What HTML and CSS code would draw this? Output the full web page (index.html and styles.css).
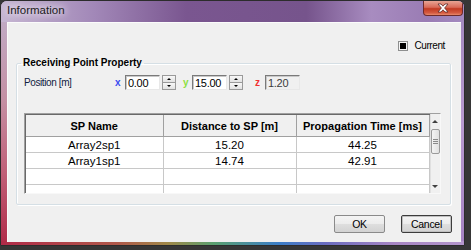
FILE: index.html
```html
<!DOCTYPE html>
<html lang="en">
<head>
  <meta charset="UTF-8">
  <title>Information</title>
  <link rel="stylesheet" href="styles.css">
</head>
<body>

<div class="window">
  <div class="titlebar">
    <span class="title">Information</span>
    <div class="close">
      <svg width="14" height="10" viewBox="0 0 14 10">
        <path d="M2 1 L5 1 L7 3.2 L9 1 L12 1 L8.6 5 L12 9 L9 9 L7 6.8 L5 9 L2 9 L5.4 5 Z" fill="#fff" stroke="#5a2a2a" stroke-width="0.8"/>
      </svg>
    </div>
  </div>

  <div class="client">
    <div class="top-row">
      <label class="check"><span class="box"><span class="mark"></span></span>Current</label>
    </div>

    <fieldset class="group">
      <legend>Receiving Point Property</legend>

      <div class="pos-row">
        <span class="pos-label">Position [m]</span>
        <span class="axis ax-x">x</span>
        <span class="field">0.00</span>
        <span class="spin"><span class="up"></span><span class="down"></span></span>
        <span class="axis ax-y">y</span>
        <span class="field">15.00</span>
        <span class="spin"><span class="up"></span><span class="down"></span></span>
        <span class="axis ax-z">z</span>
        <span class="field disabled">1.20</span>
      </div>

      <div class="list">
        <table class="grid">
          <colgroup>
            <col class="c1"><col class="c2"><col class="c3">
          </colgroup>
          <thead>
            <tr><th>SP Name</th><th>Distance to SP [m]</th><th>Propagation Time [ms]</th></tr>
          </thead>
          <tbody>
            <tr><td>Array2sp1</td><td>15.20</td><td>44.25</td></tr>
            <tr><td>Array1sp1</td><td>14.74</td><td>42.91</td></tr>
            <tr><td></td><td></td><td></td></tr>
            <tr><td></td><td></td><td></td></tr>
          </tbody>
        </table>
        <div class="vscroll">
          <div class="arrow arrow-up"></div>
          <div class="track"><div class="thumb"><span></span><span></span><span></span></div></div>
          <div class="arrow arrow-down"></div>
        </div>
      </div>
    </fieldset>

    <div class="buttons">
      <button type="button" class="btn">OK</button>
      <button type="button" class="btn default">Cancel</button>
    </div>
  </div>
</div>

</body>
</html>
```

FILE: styles.css
```css
body {
  margin: 0;
  background: #363636;
  font-family: 'Liberation Sans', Arial, sans-serif;
  color: #000;
}

.window {
  width: 465px;
  height: 246px;
  box-sizing: border-box;
  border: 1px solid #2c2c2c;
  border-radius: 7px 7px 0 0;
  overflow: hidden;
  background:
    linear-gradient(to right, #b02a48 0%, #b0584a 25%, #a08848 36%, #5aa070 46%, #3c7ec8 60%, #6a6cc0 70%, #a886c4 85%, #b496cc 100%) left bottom / 100% 4px no-repeat,
    linear-gradient(to bottom, #c0b0cc 0%, #c490a4 40%, #c06078 70%, #b02a48 100%) left top / 6px 100% no-repeat,
    linear-gradient(to bottom, #a086bc 0%, #b89ad0 50%, #a582c2 100%) right top / 3px 100% no-repeat,
    #a48ac0;
}

.titlebar {
  height: 21px;
  display: flex;
  justify-content: space-between;
  align-items: flex-start;
  background: linear-gradient(to right, #c6b6d2 0%, #a288b8 20%, #7a5690 40%, #76548c 66%, #a88cc0 80%, #9a7cb4 92%, #a48ac0 100%);
}

.title {
  margin: 3px 0 0 6px;
  font-size: 11.5px;
  color: #202020;
  text-shadow: 0 0 6px #f2ecf6, 0 0 10px #f2ecf6;
}

.close {
  width: 40px;
  height: 15px;
  margin-right: 1px;
  box-sizing: border-box;
  border: 1px solid #6e2a2a;
  border-top: none;
  border-radius: 0 0 4px 4px;
  background: linear-gradient(to bottom, #e8a494 0%, #d86a58 45%, #c23a22 55%, #d45a40 85%, #e88a6c 100%);
  display: flex;
  justify-content: center;
  align-items: center;
}

.client {
  width: 454px;
  height: 220px;
  margin-left: 6px;
  box-sizing: border-box;
  background: #f0f0f0;
  border-top: 1px solid #fbfbfb;
  border-left: 1px solid #fbfbfb;
}

.top-row {
  display: flex;
  justify-content: flex-end;
  padding: 17px 16px 0 0;
  height: 11px;
}

.check {
  display: flex;
  align-items: center;
  gap: 6px;
  font-size: 10px;
  letter-spacing: -0.4px;
  line-height: 11px;
}

.box {
  width: 10px;
  height: 10px;
  box-sizing: border-box;
  border: 1px solid #8e8f8f;
  background: #f4f4f4;
  display: flex;
  justify-content: center;
  align-items: center;
}

.mark {
  width: 6px;
  height: 6px;
  background: #000;
}

.group {
  margin: 6px 0 0 8px;
  width: 435px;
  box-sizing: border-box;
  padding: 0 0 10px 0;
  border: 1px solid #d5dfe5;
  box-shadow: inset 1px 1px 0 #fff, 1px 1px 0 #fff;
  border-radius: 2px;
}

.group legend {
  margin-left: 4px;
  padding: 0 2px;
  font-size: 10px;
  font-weight: bold;
  line-height: 12px;
}

.pos-row {
  display: flex;
  align-items: center;
  height: 15px;
  margin-top: 6px;
  padding-left: 7px;
  font-size: 10px;
  letter-spacing: -0.4px;
}

.pos-label {
  width: 91px;
  color: #102040;
}

.axis {
  font-weight: bold;
  font-size: 10px;
  letter-spacing: 0;
}
.ax-x { width: 10px; color: #3a4cf0; }
.ax-y { width: 9px; color: #8ce040; }
.ax-z { width: 10px; color: #f03030; margin-left: 5px; }

.field {
  width: 35px;
  height: 15px;
  box-sizing: border-box;
  padding: 1px 0 0 2px;
  border: 1px solid;
  border-color: #7a7a7a #e8e8e8 #e8e8e8 #7a7a7a;
  box-shadow: inset 1px 1px 0 #c8c8c8;
  background: #fff;
  font-size: 11px;
  letter-spacing: -0.3px;
  line-height: 12px;
}
.field.disabled {
  background: #f0f0f0;
  color: #3a3a3a;
}

.spin {
  width: 14px;
  height: 15px;
  margin: 0 7px 0 2px;
  display: flex;
  flex-direction: column;
}
.spin span {
  flex: 1;
  border: 1px solid #9a9a9a;
  background: linear-gradient(#f8f8f8, #e2e2e2);
  display: flex;
  justify-content: center;
  align-items: center;
}
.spin span + span { border-top: none; }
.spin .up::after {
  content: "";
  border: 2px solid transparent;
  border-bottom: 2px solid #000;
  border-top: none;
}
.spin .down::after {
  content: "";
  border: 2px solid transparent;
  border-top: 2px solid #000;
  border-bottom: none;
}

.list {
  display: flex;
  width: 417px;
  height: 81px;
  margin: 23px 0 0 7px;
  box-sizing: border-box;
  border: 1px solid;
  border-color: #a0a0a0 #f8f8f8 #f8f8f8 #a0a0a0;
  box-shadow: inset 1px 1px 0 #696969;
  background: #fff;
  overflow: hidden;
}

.grid {
  border-collapse: collapse;
  table-layout: fixed;
  width: 403px;
  margin: 1px 0 0 1px;
  font-size: 11.5px;
}
.grid .c1 { width: 137px; }
.grid .c2 { width: 133px; }
.grid .c3 { width: 133px; }

.grid th {
  height: 21px;
  padding: 0;
  background: #f0f0f0;
  border-right: 1px solid #a0a0a0;
  border-bottom: 1px solid #a0a0a0;
  font-size: 11px;
  font-weight: bold;
  text-align: center;
}

.grid td {
  height: 15px;
  padding: 0;
  border-right: 1px solid #c8c8c8;
  border-bottom: 1px solid #c8c8c8;
  text-align: center;
  line-height: 14px;
}

.vscroll {
  width: 12px;
  display: flex;
  flex-direction: column;
  background: #f0f0f0;
  border-left: 1px solid #e0e0e0;
}

.arrow {
  height: 14px;
  display: flex;
  justify-content: center;
  align-items: center;
}
.arrow-up::after {
  content: "";
  border: 3px solid transparent;
  border-bottom: 3px solid #404040;
  border-top: none;
}
.arrow-down::after {
  content: "";
  border: 3px solid transparent;
  border-top: 3px solid #404040;
  border-bottom: none;
}

.track {
  flex: 1;
  padding-top: 1px;
}

.thumb {
  height: 25px;
  box-sizing: border-box;
  border: 1px solid #9a9a9a;
  border-radius: 2px;
  background: linear-gradient(to right, #f4f4f4, #e0e0e0);
  display: flex;
  flex-direction: column;
  justify-content: center;
  align-items: center;
  gap: 1px;
}
.thumb span {
  width: 5px;
  height: 1px;
  background: #8a8a8a;
}

.buttons {
  display: flex;
  justify-content: flex-end;
  gap: 16px;
  margin-top: 10px;
  padding-right: 9px;
}

.btn {
  width: 51px;
  height: 18px;
  padding: 0;
  border: 1px solid #8a8a8a;
  border-radius: 2px;
  background: linear-gradient(to bottom, #f4f4f4 0%, #ececec 48%, #dedede 52%, #d2d2d2 100%);
  font-family: 'Liberation Sans', Arial, sans-serif;
  font-size: 10.5px;
  letter-spacing: -0.3px;
  color: #000;
}
.btn.default {
  border-color: #3c3c3c;
  box-shadow: inset 0 0 0 1px #c0c0c0;
}
```
